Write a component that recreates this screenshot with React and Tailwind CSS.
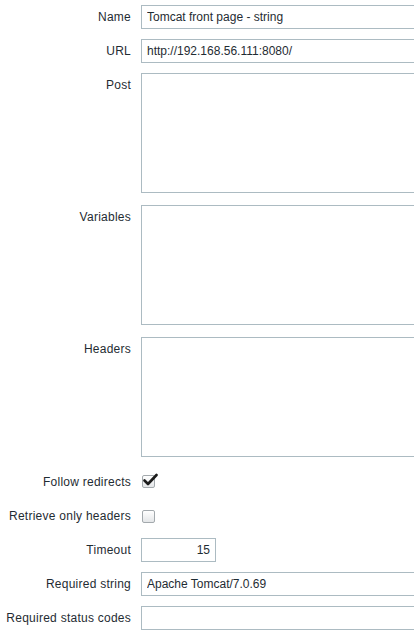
const inputCls =
  'h-[24px] w-[453px] shrink-0 border border-[#acbbc2] bg-white px-[5px] text-[12px] text-[#1f2c33] outline-none'

const textareaCls =
  'h-[120px] w-[453px] shrink-0 resize-none border border-[#acbbc2] bg-white px-[5px] py-[4px] text-[12px] text-[#1f2c33] outline-none'

const labelCls =
  'w-[141px] shrink-0 pr-[10px] text-right text-[12px] leading-[24px] tracking-[0.25px] text-[#1f2c33]'

function Row({ label, children, className = 'pt-[5px] pb-[5px]' }) {
  return (
    <div className={`flex items-start ${className}`}>
      <div className={labelCls}>{label}</div>
      {children}
    </div>
  )
}

function CheckRow({ label, checked, className }) {
  return (
    <div className={`flex items-center ${className}`}>
      <div className={labelCls}>{label}</div>
      <span className="relative ml-[1px] block h-[13px] w-[13px] rounded-[2px] border border-[#a3a9ad] bg-gradient-to-b from-white to-[#e4e6e8]">
        {checked ? (
          <svg
            className="absolute left-[0px] top-[-3px]"
            width="15"
            height="14"
            viewBox="0 0 15 14"
          >
            <path d="M1.5 7.5 L5 11 L13.5 2" fill="none" stroke="#1b1b1b" strokeWidth="2.6" strokeLinecap="round" strokeLinejoin="round" />
          </svg>
        ) : null}
      </span>
    </div>
  )
}

export default function App() {
  return (
    <div className="h-[633px] w-[414px] overflow-hidden bg-white font-['Liberation_Sans',Arial,sans-serif]">
      <Row label="Name">
        <input className={inputCls} defaultValue="Tomcat front page - string" />
      </Row>
      <Row label="URL">
        <input className={inputCls} defaultValue="http://192.168.56.111:8080/" />
      </Row>
      <Row label="Post" className="pt-[5px] pb-[7px]">
        <textarea className={textareaCls} />
      </Row>
      <Row label="Variables" className="pt-[5px] pb-[7px]">
        <textarea className={textareaCls} />
      </Row>
      <Row label="Headers" className="pt-[5px] pb-[7px]">
        <textarea className={textareaCls} />
      </Row>
      <CheckRow label="Follow redirects" checked className="h-[35px]" />
      <CheckRow label="Retrieve only headers" className="h-[34px]" />
      <Row label="Timeout">
        <input
          className="h-[24px] w-[75px] shrink-0 border border-[#acbbc2] bg-white px-[5px] text-right text-[12px] text-[#1f2c33] outline-none"
          defaultValue="15"
        />
      </Row>
      <Row label="Required string">
        <input className={inputCls} defaultValue="Apache Tomcat/7.0.69" />
      </Row>
      <Row label="Required status codes">
        <input className={inputCls} defaultValue="" />
      </Row>
    </div>
  )
}
